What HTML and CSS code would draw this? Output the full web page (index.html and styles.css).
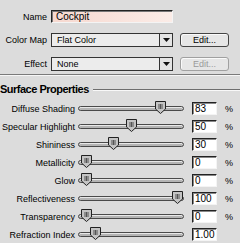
FILE: index.html
```html
<!DOCTYPE html>
<html>
<head>
<meta charset="utf-8">
<link rel="stylesheet" href="styles.css">
</head>
<body>
<div class="panel">
  <div class="top">
    <div class="frow first">
      <span class="flabel">Name</span>
      <div class="namefield">Cockpit</div>
    </div>
    <div class="frow">
      <span class="flabel">Color Map</span>
      <div class="popup"><span class="ptext">Flat Color</span><span class="parrow"><svg width="7" height="4" viewBox="0 0 7 4"><polygon points="0,0 7,0 3.5,4" fill="#111"/></svg></span></div>
      <div class="btn">Edit...</div>
    </div>
    <div class="frow">
      <span class="flabel">Effect</span>
      <div class="popup"><span class="ptext">None</span><span class="parrow"><svg width="7" height="4" viewBox="0 0 7 4"><polygon points="0,0 7,0 3.5,4" fill="#111"/></svg></span></div>
      <div class="btn disabled">Edit...</div>
    </div>
  </div>
  <div class="divider"></div>
  <div class="heading"><span>Surface Properties</span><span class="hline"></span></div>
  <div class="rows">
    <div class="srow"><span class="slabel">Diffuse Shading</span><div class="track"><svg class="thumb" style="left:76px" width="11" height="13" viewBox="0 0 11 13"><polygon points="0.5,0.5 10.5,0.5 10.5,8 5.5,12.5 0.5,8" fill="#c4c4c4" stroke="#222"/><path d="M4 3v5M5.5 3v5M7 3v5" stroke="#555"/></svg></div><div class="vbox">83</div><span class="unit">%</span></div>
    <div class="srow"><span class="slabel">Specular Highlight</span><div class="track"><svg class="thumb" style="left:47px" width="11" height="13" viewBox="0 0 11 13"><polygon points="0.5,0.5 10.5,0.5 10.5,8 5.5,12.5 0.5,8" fill="#c4c4c4" stroke="#222"/><path d="M4 3v5M5.5 3v5M7 3v5" stroke="#555"/></svg></div><div class="vbox">50</div><span class="unit">%</span></div>
    <div class="srow"><span class="slabel">Shininess</span><div class="track"><svg class="thumb" style="left:29px" width="11" height="13" viewBox="0 0 11 13"><polygon points="0.5,0.5 10.5,0.5 10.5,8 5.5,12.5 0.5,8" fill="#c4c4c4" stroke="#222"/><path d="M4 3v5M5.5 3v5M7 3v5" stroke="#555"/></svg></div><div class="vbox">30</div><span class="unit">%</span></div>
    <div class="srow"><span class="slabel">Metallicity</span><div class="track"><svg class="thumb" style="left:2px" width="11" height="13" viewBox="0 0 11 13"><polygon points="0.5,0.5 10.5,0.5 10.5,8 5.5,12.5 0.5,8" fill="#c4c4c4" stroke="#222"/><path d="M4 3v5M5.5 3v5M7 3v5" stroke="#555"/></svg></div><div class="vbox">0</div><span class="unit">%</span></div>
    <div class="srow"><span class="slabel">Glow</span><div class="track"><svg class="thumb" style="left:2px" width="11" height="13" viewBox="0 0 11 13"><polygon points="0.5,0.5 10.5,0.5 10.5,8 5.5,12.5 0.5,8" fill="#c4c4c4" stroke="#222"/><path d="M4 3v5M5.5 3v5M7 3v5" stroke="#555"/></svg></div><div class="vbox">0</div><span class="unit">%</span></div>
    <div class="srow"><span class="slabel">Reflectiveness</span><div class="track"><svg class="thumb" style="left:93px" width="11" height="13" viewBox="0 0 11 13"><polygon points="0.5,0.5 10.5,0.5 10.5,8 5.5,12.5 0.5,8" fill="#c4c4c4" stroke="#222"/><path d="M4 3v5M5.5 3v5M7 3v5" stroke="#555"/></svg></div><div class="vbox">100</div><span class="unit">%</span></div>
    <div class="srow"><span class="slabel">Transparency</span><div class="track"><svg class="thumb" style="left:2px" width="11" height="13" viewBox="0 0 11 13"><polygon points="0.5,0.5 10.5,0.5 10.5,8 5.5,12.5 0.5,8" fill="#c4c4c4" stroke="#222"/><path d="M4 3v5M5.5 3v5M7 3v5" stroke="#555"/></svg></div><div class="vbox">0</div><span class="unit">%</span></div>
    <div class="srow"><span class="slabel">Refraction Index</span><div class="track"><svg class="thumb" style="left:11px" width="11" height="13" viewBox="0 0 11 13"><polygon points="0.5,0.5 10.5,0.5 10.5,8 5.5,12.5 0.5,8" fill="#c4c4c4" stroke="#222"/><path d="M4 3v5M5.5 3v5M7 3v5" stroke="#555"/></svg></div><div class="vbox">1.00</div><span class="unit"></span></div>
  </div>
</div>
</body>
</html>
```
FILE: styles.css
```css
html, body {
  margin: 0;
  padding: 0;
  background: #dcdcdc;
}
.panel {
  width: 240px;
  height: 243px;
  overflow: hidden;
  font-family: "Liberation Sans", Arial, sans-serif;
  font-size: 9px;
  color: #000;
  background: #dcdcdc;
}
.top {
  padding-top: 10px;
  padding-bottom: 3px;
  display: flex;
  flex-direction: column;
  gap: 10px;
}
.frow {
  display: flex;
  align-items: center;
  height: 14px;
  flex-shrink: 0;
}
.frow.first {
  height: 13px;
}
.flabel {
  width: 47px;
  text-align: right;
  margin-right: 4px;
  font-size: 9px;
}
.namefield {
  width: 122px;
  height: 13px;
  box-sizing: border-box;
  border-top: 1px solid #222;
  border-left: 1px solid #222;
  border-right: 1px solid #f4f4f4;
  border-bottom: 1px solid #f4f4f4;
  box-shadow: inset 1px 1px 0 #777;
  background: linear-gradient(to right, #f6d8cf, #fbece7);
  padding-left: 4px;
  font-size: 10px;
  line-height: 11px;
}
.popup {
  width: 122px;
  height: 14px;
  box-sizing: border-box;
  border: 1px solid #333;
  background: #ececec;
  display: flex;
  align-items: center;
  justify-content: space-between;
}
.ptext {
  padding-left: 5px;
  font-size: 9px;
}
.parrow {
  width: 13px;
  height: 12px;
  box-sizing: border-box;
  border-left: 1px solid #333;
  display: flex;
  align-items: center;
  justify-content: center;
  background: #e4e4e4;
}
.btn {
  margin-left: 7px;
  width: 49px;
  height: 14px;
  box-sizing: border-box;
  border: 1px solid #444;
  border-radius: 3px;
  background: #e6e6e6;
  box-shadow: inset 1px 1px 0 #fafafa;
  text-align: center;
  font-size: 9px;
  line-height: 12px;
}
.btn.disabled {
  border-color: #a0a0a0;
  color: #9a9a9a;
}
.divider {
  height: 1px;
  background: #7a7a7a;
  border-bottom: 1px solid #f6f6f6;
}
.heading {
  display: flex;
  align-items: center;
  height: 16px;
  margin-top: 5px;
  font-size: 11px;
  font-weight: bold;
  letter-spacing: -0.5px;
}
.hline {
  flex: 1;
  height: 1px;
  margin-left: 4px;
  margin-top: 1px;
  background: #6e6e6e;
  border-bottom: 1px solid #f8f8f8;
}
.rows {
  margin-top: 5px;
  display: flex;
  flex-direction: column;
  gap: 5px;
}
.srow {
  display: flex;
  align-items: center;
  height: 13px;
}
.slabel {
  width: 75px;
  text-align: right;
  margin-right: 3px;
  font-size: 9px;
  white-space: nowrap;
}
.track {
  position: relative;
  width: 106px;
  height: 5px;
  box-sizing: border-box;
  border: 1px solid #4a4a4a;
  border-radius: 3px;
  background: #b4b4b4;
  box-shadow: inset 0 1px 0 #e8e8e8;
}
.thumb {
  position: absolute;
  top: -6px;
  display: block;
}
.vbox {
  margin-left: 8px;
  width: 25px;
  height: 13px;
  box-sizing: border-box;
  border-top: 1px solid #222;
  border-left: 1px solid #222;
  border-right: 1px solid #f4f4f4;
  border-bottom: 1px solid #f4f4f4;
  box-shadow: inset 1px 1px 0 #888;
  background: #fff;
  padding-left: 2px;
  font-size: 10px;
  line-height: 11px;
}
.unit {
  margin-left: 8px;
  font-size: 9px;
}
```
